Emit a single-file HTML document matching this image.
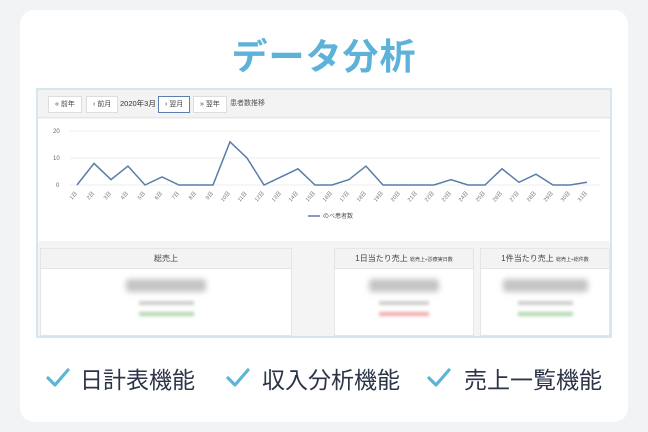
<!DOCTYPE html>
<html><head><meta charset="utf-8"><style>
*{margin:0;padding:0;box-sizing:border-box}
body{width:648px;height:432px;background:#f2f3f5;font-family:"Liberation Sans","Noto Sans CJK JP",sans-serif;position:relative;overflow:hidden}
.card{position:absolute;left:20px;top:10px;width:608px;height:412px;background:#fff;border-radius:14px}
.title{position:absolute;left:0;width:648px;top:28px;text-align:center;font-size:36px;color:#5cb2d8;font-weight:bold;letter-spacing:1px}
.shot{position:absolute;left:36px;top:88px;width:576px;height:250px;border:2px solid #d6e6ee;background:#f4f4f4}
.bar{position:absolute;left:0;top:0;width:572px;height:28px;background:#f3f3f3;border-bottom:1px solid #e6e6e6}
.btn{position:absolute;top:6px;height:17px;background:#fff;border:1px solid #ddd;font-size:7px;line-height:15px;padding:0 6px;color:#444}
.plot{position:absolute;left:0;top:29px;width:572px;height:122px;background:#fff}
.panel{position:absolute;top:158px;height:88px;background:#fff;border:1px solid #e5e5e5}
.ph{height:20px;background:#f3f3f3;border-bottom:1px solid #e5e5e5;font-size:8px;line-height:20px;text-align:center;color:#444}
.big{margin:10px auto 0;height:13px;background:#c4c4c4;filter:blur(3px);border-radius:3px}
.s1{margin:9px auto 0;height:4px;background:#ccc;filter:blur(1.5px)}
.s2{margin:7px auto 0;height:4px;filter:blur(1.5px)}
.feat{position:absolute;top:361px;font-size:23px;color:#2c3448}
</style></head><body>
<div class="card"></div>
<div class="title">データ分析</div>
<div class="shot">
 <div class="bar">
  <div class="btn" style="left:10px">« 前年</div>
  <div class="btn" style="left:48px">‹ 前月</div>
  <div style="position:absolute;left:82px;top:6px;font-size:7.5px;line-height:16px;color:#333">2020年3月</div>
  <div class="btn" style="left:120px;border:1.5px solid #5a7fb0;">› 翌月</div>
  <div class="btn" style="left:155px">» 翌年</div>
  <div style="position:absolute;left:192px;top:6px;font-size:7px;line-height:16px;color:#555">患者数推移</div>
 </div>
 <div class="plot"></div>
 <div class="panel" style="left:2px;width:252px"><div class="ph">総売上</div><div class="big" style="width:80px"></div><div class="s1" style="width:55px"></div><div class="s2" style="width:55px;background:#aed8ae"></div></div>
 <div class="panel" style="left:296px;width:140px"><div class="ph">1日当たり売上 <span style="font-size:5px">総売上÷診療実日数</span></div><div class="big" style="width:70px"></div><div class="s1" style="width:50px"></div><div class="s2" style="width:50px;background:#eeaaaa"></div></div>
 <div class="panel" style="left:442px;width:130px"><div class="ph">1件当たり売上 <span style="font-size:5px">総売上÷総件数</span></div><div class="big" style="width:85px"></div><div class="s1" style="width:55px"></div><div class="s2" style="width:55px;background:#aed8ae"></div></div>
</div>
<svg style="position:absolute;left:0;top:0" width="648" height="432">
 <g stroke="#eee" stroke-width="1"><line x1="70" y1="131" x2="600" y2="131"/><line x1="70" y1="158" x2="600" y2="158"/><line x1="70" y1="185" x2="600" y2="185"/></g>
 <g font-size="6" fill="#666" font-family="Liberation Sans"><text x="53" y="133">20</text><text x="53" y="160">10</text><text x="56" y="187">0</text></g>
 <polyline fill="none" stroke="#5a7ca8" stroke-width="1.5" points="77,185 94,163.4 111,179.6 128,166.1 145,185 162,176.9 179,185 196,185 213,185 230,141.8 247,158 264,185 281,176.9 298,168.8 315,185 332,185 349,179.6 366,166.1 383,185 400,185 417,185 434,185 451,179.6 468,185 485,185 502,168.8 519,182.3 536,174.2 553,185 570,185 587,182.3"/>
 <g font-size="5.5" fill="#777" font-family="Liberation Sans">
 <text transform="translate(72,200) rotate(-50)">1日</text><text transform="translate(89,200) rotate(-50)">2日</text><text transform="translate(106,200) rotate(-50)">3日</text><text transform="translate(123,200) rotate(-50)">4日</text><text transform="translate(140,200) rotate(-50)">5日</text><text transform="translate(157,200) rotate(-50)">6日</text><text transform="translate(174,200) rotate(-50)">7日</text><text transform="translate(191,200) rotate(-50)">8日</text><text transform="translate(208,200) rotate(-50)">9日</text><text transform="translate(223,202) rotate(-50)">10日</text><text transform="translate(240,202) rotate(-50)">11日</text><text transform="translate(257,202) rotate(-50)">12日</text><text transform="translate(274,202) rotate(-50)">13日</text><text transform="translate(291,202) rotate(-50)">14日</text><text transform="translate(308,202) rotate(-50)">15日</text><text transform="translate(325,202) rotate(-50)">16日</text><text transform="translate(342,202) rotate(-50)">17日</text><text transform="translate(359,202) rotate(-50)">18日</text><text transform="translate(376,202) rotate(-50)">19日</text><text transform="translate(393,202) rotate(-50)">20日</text><text transform="translate(410,202) rotate(-50)">21日</text><text transform="translate(427,202) rotate(-50)">22日</text><text transform="translate(444,202) rotate(-50)">23日</text><text transform="translate(461,202) rotate(-50)">24日</text><text transform="translate(478,202) rotate(-50)">25日</text><text transform="translate(495,202) rotate(-50)">26日</text><text transform="translate(512,202) rotate(-50)">27日</text><text transform="translate(529,202) rotate(-50)">28日</text><text transform="translate(546,202) rotate(-50)">29日</text><text transform="translate(563,202) rotate(-50)">30日</text><text transform="translate(580,202) rotate(-50)">31日</text>
 </g>
 <line x1="308" y1="216" x2="320" y2="216" stroke="#5a7ca8" stroke-width="1.5"/>
 <text x="323" y="218" font-size="6" fill="#555" font-family="Noto Sans CJK JP">のべ患者数</text>
 <g fill="none" stroke="#5fb4d6" stroke-width="3.2" stroke-linecap="round" stroke-linejoin="round">
  <polyline points="48,378 55,385 68,370"/><polyline points="228,378 235,385 248,370"/><polyline points="429,378 436,385 449,370"/>
 </g>
</svg>
<div class="feat" style="left:80px">日計表機能</div>
<div class="feat" style="left:262px">収入分析機能</div>
<div class="feat" style="left:464px">売上一覧機能</div>
</body></html>
